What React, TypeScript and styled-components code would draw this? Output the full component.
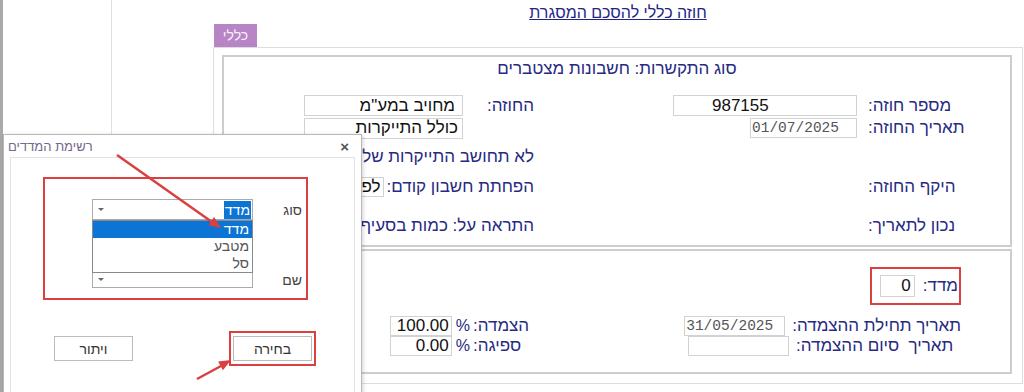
import styled, { createGlobalStyle } from "styled-components";

const NAVY = "#272a82";
const MARK = "#d9403f";

const GlobalStyle = createGlobalStyle`
  * { box-sizing: border-box; }
  html, body { margin: 0; padding: 0; background: #fff; }
  body {
    font-family: "Liberation Sans", Arial, "Noto Sans", sans-serif;
    width: 1024px;
    height: 392px;
    overflow: hidden;
  }
`;

function App() {
  return (
    <>
      <GlobalStyle />
      <Page>
        <LeftRail>
          <RailColumn />
        </LeftRail>
        <Main>
          <PageTitle>חוזה כללי להסכם המסגרת</PageTitle>
          <TabStrip>
            <Tab>כללי</Tab>
          </TabStrip>
          <Panel>
            <Section $h={192} $pr={44}>
              <SectionHeading>סוג התקשרות: חשבונות מצטברים</SectionHeading>
              <FormRow $mt={16} $h={21}>
                <RightCell $w={432}>
                  <FieldLabel $w={109}>מספר חוזה:</FieldLabel>
                  <Field $w={184} $h={21} $ltr $padStart={38}>
                    987155
                  </Field>
                </RightCell>
                <LeftCell>
                  <FieldLabel $w={71} $end>
                    החוזה:
                  </FieldLabel>
                  <Field $w={159} $h={21} $padStart={7}>
                    מחויב במע"מ
                  </Field>
                </LeftCell>
              </FormRow>
              <FormRow $mt={2} $h={20}>
                <RightCell $w={432}>
                  <FieldLabel $w={109}>תאריך החוזה:</FieldLabel>
                  <Field $w={107} $h={20} $ltr $mono $padStart={1}>
                    01/07/2025
                  </Field>
                </RightCell>
                <LeftCell>
                  <FieldLabel $w={71} />
                  <Field $w={159} $h={21} $padStart={4}>
                    כולל התייקרות
                  </Field>
                </LeftCell>
              </FormRow>
              <FormRow $mt={9} $h={20}>
                <RightCell $w={432} />
                <LeftCell>
                  <Note>לא תחושב התייקרות שלילית</Note>
                </LeftCell>
              </FormRow>
              <FormRow $mt={10} $h={20}>
                <RightCell $w={432}>
                  <FieldLabel $w={109}>היקף החוזה:</FieldLabel>
                </RightCell>
                <LeftCell>
                  <Note>הפחתת חשבון קודם:</Note>
                  <Field $w={110} $h={20} $padStart={2} $gapStart={3}>
                    לפני
                  </Field>
                </LeftCell>
              </FormRow>
              <FormRow $mt={19} $h={20}>
                <RightCell $w={432}>
                  <FieldLabel $w={109}>נכון לתאריך:</FieldLabel>
                </RightCell>
                <LeftCell>
                  <Note>התראה על: כמות בסעיף</Note>
                </LeftCell>
              </FormRow>
            </Section>

            <Section $h={125} $pr={49}>
              <MarkBox>
                <FieldLabel $pl={0}>מדד:</FieldLabel>
                <Field $w={35} $h={22} $padStart={3} $gapStart={8}>
                  0
                </Field>
              </MarkBox>
              <FormRow $mt={11} $h={20}>
                <RightCell $w={428}>
                  <FieldLabel $w={172} $pl={7}>
                    תאריך תחילת ההצמדה:
                  </FieldLabel>
                  <Field $w={101} $h={20} $ltr $mono $padStart={1}>
                    31/05/2025
                  </Field>
                </RightCell>
                <LeftCell>
                  <FieldLabel $w={60} $pl={0}>
                    הצמדה:
                  </FieldLabel>
                  <Percent>%</Percent>
                  <Field $w={62} $h={20} $ltr $alignEnd $padStart={2}>
                    100.00
                  </Field>
                </LeftCell>
              </FormRow>
              <FormRow $mt={0} $h={20}>
                <RightCell $w={428}>
                  <FieldLabel $w={172} $pl={7}>
                    תאריך&nbsp; סיום ההצמדה:
                  </FieldLabel>
                  <Field $w={101} $h={20} $ltr $mono />
                </RightCell>
                <LeftCell>
                  <FieldLabel $w={60} $pl={0}>
                    ספיגה:
                  </FieldLabel>
                  <Percent>%</Percent>
                  <Field $w={62} $h={20} $ltr $alignEnd $padStart={2}>
                    0.00
                  </Field>
                </LeftCell>
              </FormRow>
            </Section>
          </Panel>
        </Main>

        <Dialog>
          <DialogHeader>
            <DialogTitle>רשימת המדדים</DialogTitle>
            <CloseButton>×</CloseButton>
          </DialogHeader>
          <DialogBody>
            <RedFrame>
              <SelectRow $mt={20} $h={21}>
                <Select>
                  <Caret />
                  <SelectText>
                    <Highlight>מדד</Highlight>
                  </SelectText>
                </Select>
                <SelectLabel>סוג</SelectLabel>
              </SelectRow>
              <SelectRow $mt={51} $h={17}>
                <Select>
                  <Caret />
                  <SelectText />
                </Select>
                <SelectLabel>שם</SelectLabel>
              </SelectRow>
              <DropList>
                <DropItem $active>מדד</DropItem>
                <DropItem>מטבע</DropItem>
                <DropItem>סל</DropItem>
              </DropList>
            </RedFrame>
            <ButtonRow>
              <DialogButton>ויתור</DialogButton>
              <ButtonMark>
                <DialogButton>בחירה</DialogButton>
              </ButtonMark>
            </ButtonRow>
          </DialogBody>
        </Dialog>

        <Arrows viewBox="0 0 1024 392" width="1024" height="392">
          <line x1="117" y1="155" x2="212" y2="222" stroke={MARK} strokeWidth="2.5" />
          <polygon points="221,228 208.3,225.2 214.1,217" fill={MARK} />
          <line x1="197" y1="379" x2="221" y2="366" stroke={MARK} strokeWidth="2.5" />
          <polygon points="231,360 222.9,370.3 218.1,361.5" fill={MARK} />
        </Arrows>
      </Page>
    </>
  );
}

const Page = styled.div`
  position: relative;
  display: flex;
  width: 1024px;
  height: 392px;
  overflow: hidden;
  background: #fff;
`;

const LeftRail = styled.div`
  flex: 0 0 213px;
  display: flex;
  border-left: 3px solid #a9a9a9;
`;

const RailColumn = styled.div`
  width: 109px;
  border-right: 1px solid #e0e0e0;
`;

const Main = styled.div`
  flex: 1;
  display: flex;
  flex-direction: column;
  padding-right: 1px;
`;

const PageTitle = styled.div`
  height: 24px;
  line-height: 25px;
  text-align: center;
  font-size: 16px;
  color: #1f2586;
  text-decoration: underline;
  direction: rtl;
`;

const TabStrip = styled.div`
  height: 23px;
  padding-left: 1px;
  display: flex;
`;

const Tab = styled.div`
  width: 43px;
  height: 23px;
  line-height: 23px;
  text-align: center;
  background: #b785c6;
  color: #f7eff9;
  font-size: 14px;
  direction: rtl;
`;

const Panel = styled.div`
  height: 337px;
  border: 1px solid #dedede;
  padding: 7px 10px 0 8px;
  display: flex;
  flex-direction: column;
  gap: 2px;
`;

const Section = styled.div<{ $h: number; $pr: number }>`
  height: ${p => p.$h}px;
  border: 2px solid #cdcdcd;
  direction: rtl;
  padding-right: ${p => p.$pr}px;
  display: flex;
  flex-direction: column;
  color: ${NAVY};
  font-size: 17px;
`;

const SectionHeading = styled.div`
  margin-right: -44px;
  padding-top: 2px;
  line-height: 20px;
  text-align: center;
`;

const FormRow = styled.div<{ $mt: number; $h: number }>`
  display: flex;
  align-items: center;
  margin-top: ${p => p.$mt}px;
  height: ${p => p.$h}px;
`;

const RightCell = styled.div<{ $w: number }>`
  flex: 0 0 ${p => p.$w}px;
  display: flex;
  align-items: center;
  height: 100%;
`;

const LeftCell = styled.div`
  flex: 1;
  display: flex;
  align-items: center;
  height: 100%;
  white-space: nowrap;
`;

const FieldLabel = styled.div<{ $w?: number; $end?: boolean; $pl?: number }>`
  ${p => (p.$w ? `flex: 0 0 ${p.$w}px;` : "")}
  padding-left: ${p => (p.$pl !== undefined ? p.$pl : p.$end ? 0 : 11)}px;
  text-align: ${p => (p.$end ? "right" : "left")};
  white-space: nowrap;
  line-height: 20px;
`;

const Field = styled.div<{
  $w: number;
  $h: number;
  $ltr?: boolean;
  $mono?: boolean;
  $alignEnd?: boolean;
  $padStart?: number;
  $gapStart?: number;
}>`
  flex: 0 0 ${p => p.$w}px;
  width: ${p => p.$w}px;
  height: ${p => p.$h}px;
  margin-right: ${p => p.$gapStart || 0}px;
  border: 1px solid #d2d2d2;
  background: #fff;
  overflow: hidden;
  white-space: nowrap;
  display: flex;
  align-items: center;
  direction: ${p => (p.$ltr ? "ltr" : "rtl")};
  justify-content: ${p => (p.$alignEnd ? "flex-end" : "flex-start")};
  padding: 0 ${p => p.$padStart || 0}px;
  font-family: ${p =>
    p.$mono ? `"Liberation Mono", "DejaVu Sans Mono", monospace` : `"Liberation Sans", Arial, sans-serif`};
  font-size: ${p => (p.$mono ? "14.5px" : "17px")};
  color: ${p => (p.$mono ? "#555" : "#111")};
`;

const Note = styled.div`
  line-height: 20px;
  white-space: nowrap;
`;

const Percent = styled.div`
  flex: 0 0 14px;
  text-align: left;
  font-size: 16px;
  margin-right: 3px;
  margin-left: 4px;
`;

const MarkBox = styled.div`
  margin-top: 16px;
  width: fit-content;
  height: 38px;
  display: flex;
  align-items: center;
  border: 2px solid ${MARK};
  padding: 0 1px 0 8px;
`;

const Dialog = styled.div`
  position: absolute;
  left: 3px;
  top: 134px;
  width: 359px;
  height: 290px;
  background: #fff;
  border: 1px solid #b8b8b8;
  box-shadow: 1px 1px 4px rgba(0, 0, 0, 0.18);
  display: flex;
  flex-direction: column;
  z-index: 5;
`;

const DialogHeader = styled.div`
  height: 22px;
  display: flex;
  align-items: center;
  justify-content: space-between;
  padding: 0 12px 0 4px;
`;

const DialogTitle = styled.div`
  font-size: 13px;
  color: #75688a;
  direction: rtl;
`;

const CloseButton = styled.div`
  font-size: 15px;
  font-weight: bold;
  color: #555;
  line-height: 1;
`;

const DialogBody = styled.div`
  flex: 1;
  margin: 0 6px;
  border: 1px solid #e2e2e2;
  font-size: 13px;
  color: #333;
`;

const RedFrame = styled.div`
  position: relative;
  margin: 19px 0 0 32px;
  width: 265px;
  height: 123px;
  border: 2px solid ${MARK};
`;

const SelectRow = styled.div<{ $mt: number; $h: number }>`
  display: flex;
  align-items: center;
  margin-top: ${p => p.$mt}px;
  height: ${p => p.$h}px;
  padding-left: 47px;
`;

const Select = styled.div`
  width: 161px;
  height: 100%;
  border: 1px solid #ababab;
  background: #fff;
  display: flex;
  align-items: center;
  justify-content: space-between;
  padding: 0 1px 0 5px;
`;

const Caret = styled.span`
  width: 0;
  height: 0;
  border-left: 3px solid transparent;
  border-right: 3px solid transparent;
  border-top: 3px solid #666;
`;

const SelectText = styled.div`
  direction: rtl;
  font-size: 14px;
`;

const Highlight = styled.span`
  background: #0b74d5;
  color: #fff;
  padding: 1px 1px;
`;

const SelectLabel = styled.div`
  margin-left: 29px;
  width: 20px;
  text-align: right;
  font-size: 14px;
  color: #444;
`;

const DropList = styled.div`
  position: absolute;
  left: 47px;
  top: 41px;
  width: 161px;
  height: 53px;
  border: 1px solid #8a8a8a;
  background: #fff;
  direction: rtl;
  z-index: 2;
`;

const DropItem = styled.div<{ $active?: boolean }>`
  height: 17px;
  line-height: 17px;
  padding-right: 3px;
  font-size: 14px;
  background: ${p => (p.$active ? "#0b74d5" : "transparent")};
  color: ${p => (p.$active ? "#fff" : "#555")};
`;

const ButtonRow = styled.div`
  display: flex;
  align-items: center;
  margin-top: 31px;
  height: 35px;
  padding-left: 43px;
`;

const DialogButton = styled.div`
  width: 79px;
  height: 25px;
  border: 1px solid #bcbcbc;
  background: #fff;
  display: flex;
  align-items: center;
  justify-content: center;
  font-size: 14px;
  color: #333;
  direction: rtl;
`;

const ButtonMark = styled.div`
  margin-left: 96px;
  border: 2px solid ${MARK};
  padding: 3px 2px;
`;

const Arrows = styled.svg`
  position: absolute;
  left: 0;
  top: 0;
  pointer-events: none;
  z-index: 10;
`;

export default App;
